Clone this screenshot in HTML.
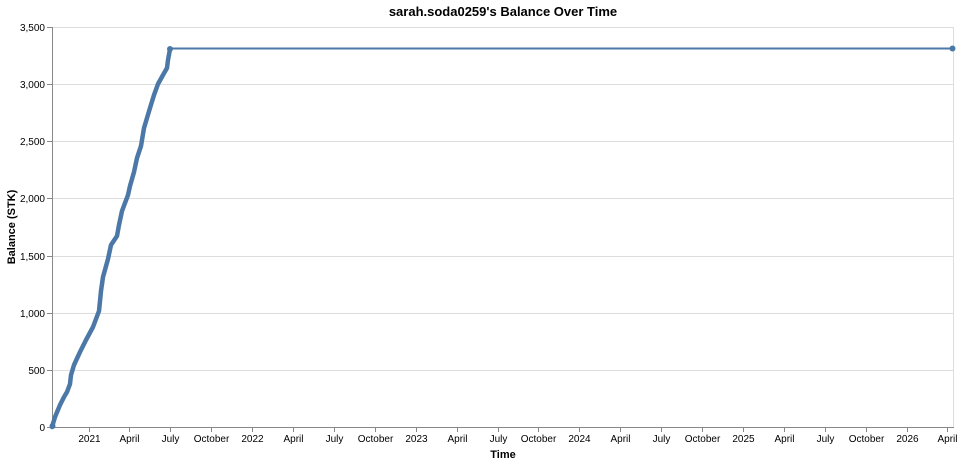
<!DOCTYPE html>
<html><head><meta charset="utf-8"><style>
html,body{margin:0;padding:0;background:#fff;}
svg{display:block;font-family:"Liberation Sans",Arial,sans-serif;}
</style></head><body>
<svg width="963" height="464" viewBox="0 0 963 464" xmlns="http://www.w3.org/2000/svg">
<text x="503" y="16" text-anchor="middle" font-size="13" font-weight="bold" fill="#000">sarah.soda0259's Balance Over Time</text>
<g stroke="#ddd" stroke-width="1">
<line x1="52" y1="27.5" x2="953" y2="27.5"/>
<line x1="52" y1="84.5" x2="953" y2="84.5"/>
<line x1="52" y1="141.5" x2="953" y2="141.5"/>
<line x1="52" y1="198.5" x2="953" y2="198.5"/>
<line x1="52" y1="256.5" x2="953" y2="256.5"/>
<line x1="52" y1="313.5" x2="953" y2="313.5"/>
<line x1="52" y1="370.5" x2="953" y2="370.5"/>
<line x1="953.5" y1="27" x2="953.5" y2="427"/>
</g>
<g stroke="#888" stroke-width="1">
<line x1="52.5" y1="27" x2="52.5" y2="428"/>
<line x1="47" y1="427.5" x2="954" y2="427.5"/>
<line x1="47" y1="27.5" x2="52" y2="27.5"/>
<line x1="47" y1="84.5" x2="52" y2="84.5"/>
<line x1="47" y1="141.5" x2="52" y2="141.5"/>
<line x1="47" y1="198.5" x2="52" y2="198.5"/>
<line x1="47" y1="256.5" x2="52" y2="256.5"/>
<line x1="47" y1="313.5" x2="52" y2="313.5"/>
<line x1="47" y1="370.5" x2="52" y2="370.5"/>
</g>
<g font-size="10" fill="#000" text-anchor="end">
<text x="45" y="31">3,500</text>
<text x="45" y="88">3,000</text>
<text x="45" y="145">2,500</text>
<text x="45" y="202">2,000</text>
<text x="45" y="260">1,500</text>
<text x="45" y="317">1,000</text>
<text x="45" y="374">500</text>
<text x="45" y="431">0</text>
</g>
<text transform="translate(15,227) rotate(-90)" text-anchor="middle" font-size="11" font-weight="bold">Balance (STK)</text>
<text x="503" y="458" text-anchor="middle" font-size="11" font-weight="bold">Time</text>
<g stroke="#888" stroke-width="1" id="ticks"></g>
<g font-size="10" fill="#000" text-anchor="middle" id="xl"></g>
<path d="M170,48.5 L953,48.5" stroke="#4c78a8" stroke-width="2" fill="none"/>
<polyline points="52,427 55,417 60,405 64,397 67,392 70,384 71,375 74,365 80,352 86,340 93,327 99,311 101,291 103,277 108,259 111,245 117,236 119,225 122,211 128,195 130,186 134,172 137,158 141,146 144,128 150,108 154,95 158,84 163,75 167,68 168,60 170,49" fill="none" stroke="#4c78a8" stroke-width="4.5" stroke-linecap="round" stroke-linejoin="round"/>
<circle cx="170" cy="49" r="3" fill="#4c78a8"/>
<circle cx="952.5" cy="48.5" r="3" fill="#4c78a8"/>
<circle cx="52.5" cy="426" r="3" fill="#4c78a8"/>
</svg>
<script>
var labels=["2021","April","July","October","2022","April","July","October","2023","April","July","October","2024","April","July","October","2025","April","July","October","2026","April"];
var t=document.getElementById('ticks'),l=document.getElementById('xl'),ns="http://www.w3.org/2000/svg";
for(var i=0;i<labels.length;i++){var x=Math.round(88.5+i*40.9)+0.5;
var ln=document.createElementNS(ns,'line');ln.setAttribute('x1',x);ln.setAttribute('x2',x);ln.setAttribute('y1',427);ln.setAttribute('y2',432);t.appendChild(ln);
var tx=document.createElementNS(ns,'text');tx.setAttribute('x',x);tx.setAttribute('y',442);tx.textContent=labels[i];l.appendChild(tx);}
</script>
</body></html>
